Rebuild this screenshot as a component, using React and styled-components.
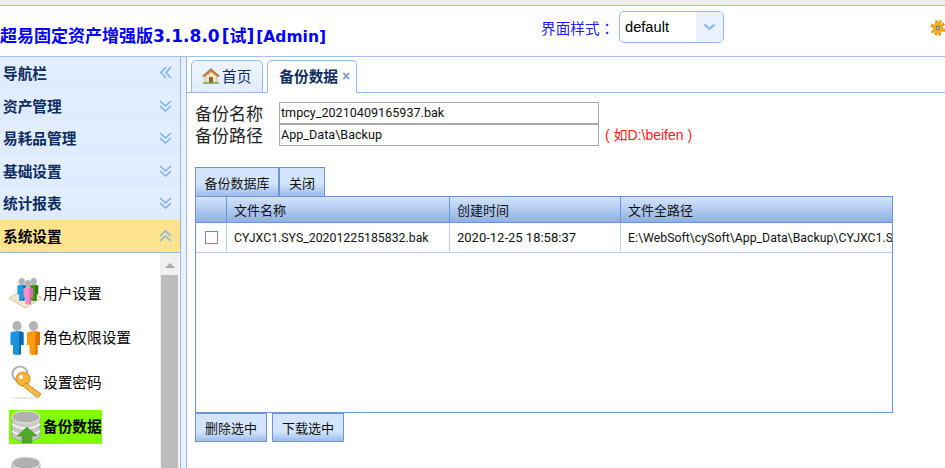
import React from "react";
import styled, { createGlobalStyle } from "styled-components";

const cjk = `"Liberation Sans", "Noto Sans CJK SC", sans-serif`;
const dataFont = `Roboto, "Noto Sans CJK SC", sans-serif`;

const GlobalStyle = createGlobalStyle`
    html, body {
        margin: 0;
        padding: 0;
        background: #fff;
        overflow: hidden;
    }
    body {
        font-family: ${cjk};
        font-size: 14.67px;
        color: #000;
    }
`;

const navItems = [
    { title: "导航栏", icon: "left" },
    { title: "资产管理", icon: "down" },
    { title: "易耗品管理", icon: "down" },
    { title: "基础设置", icon: "down" },
    { title: "统计报表", icon: "down" },
    { title: "系统设置", icon: "up", active: true },
];

const chevronPaths = {
    left: ["M7 1 L2 6.5 L7 12", "M12 1 L7 6.5 L12 12"],
    down: ["M1 2 L6.5 7 L12 2", "M1 7 L6.5 12 L12 7"],
    up: ["M1 7 L6.5 2 L12 7", "M1 12 L6.5 7 L12 12"],
};

function Chevrons({ dir }) {
    return (
        <svg width="13" height="13" viewBox="0 0 13 13" fill="none" stroke="#7fb2ea" strokeWidth="1.6">
            {chevronPaths[dir].map((d) => <path key={d} d={d} />)}
        </svg>
    );
}

function HomeIcon() {
    return (
        <svg width="18" height="17" viewBox="0 0 18 17">
            <path d="M3 8 V16 H15 V8 L9 3 Z" fill="#efe3c4" stroke="#b59a63" strokeWidth=".6" />
            <path d="M7 16 V10 H11 V16 Z" fill="#8a6a3a" />
            <path d="M0.5 9 L9 1.5 L17.5 9 L15.5 9.5 L9 4.5 L2.5 9.5 Z" fill="#c9843a" stroke="#8f5a20" strokeWidth=".5" />
            <path d="M1 16 H17" stroke="#6fa84a" strokeWidth="1.4" />
        </svg>
    );
}

function GearIcon() {
    return (
        <svg width="16" height="18" viewBox="0 0 16 18">
            <g transform="rotate(20 8 9)">
                <path d="M6.6 1 H9.4 V16.5 H6.6 Z M0.5 7.6 H15.5 V10.4 H0.5 Z" fill="#f0940a" />
                <path d="M2.6 3.6 L4.6 1.8 L13.4 14.4 L11.4 16.2 Z M13.4 3.6 L11.4 1.8 L2.6 14.4 L4.6 16.2 Z" fill="#ee9206" />
            </g>
            <circle cx="8" cy="9" r="5.4" fill="#f7ae22" />
            <circle cx="8" cy="9" r="2.4" fill="#85837a" />
            <circle cx="8" cy="9" r="1" fill="#d8d6cc" />
        </svg>
    );
}

function Person({ color, dark }) {
    return (
        <g>
            <ellipse cx="7" cy="5" rx="4.6" ry="5" fill="#b4b4b4" />
            <path d="M0.5 11.5 Q7 8.5 13.5 11.5 V24 H11 V33 Q7 35 3 33 V24 H0.5 Z" fill={color} />
            <path d="M9 10 Q12 10.5 13.5 11.5 V24 H11 V33 L9 34 Z" fill={dark} />
        </g>
    );
}

function UsersIcon() {
    return (
        <svg width="34" height="32" viewBox="0 0 34 32">
            <path d="M0 21 L17 12 L33 21 L16 31 Z" fill="#f3e7cf" stroke="#d8c39c" />
            <g transform="translate(8 1) scale(.68)"><Person color="#1f9be0" dark="#0c6fb0" /></g>
            <g transform="translate(20 1) scale(.68)"><Person color="#3f9a1c" dark="#2a7410" /></g>
            <g transform="translate(14 3) scale(.72)"><Person color="#f48fc8" dark="#dd6bab" /></g>
        </svg>
    );
}

function RolesIcon() {
    return (
        <svg width="32" height="36" viewBox="0 0 32 36">
            <g transform="translate(0 1)"><Person color="#1a93dd" dark="#0c69ad" /></g>
            <g transform="translate(16.5 1)"><Person color="#ff9a0a" dark="#dd6f00" /></g>
        </svg>
    );
}

function KeyIcon() {
    return (
        <svg width="33" height="34" viewBox="0 0 33 34">
            <circle cx="10" cy="9" r="7.5" fill="none" stroke="#b4b4b4" strokeWidth="2.2" />
            <circle cx="13" cy="14" r="7" fill="#f6b63c" stroke="#d08a1a" />
            <circle cx="11" cy="12" r="2" fill="#fff" />
            <path d="M16 18 L31 29 L28 33 L25 31 L23 29 L13 21 Z" fill="#f8bd44" stroke="#d08a1a" />
            <ellipse cx="15" cy="33" rx="14" ry="1" fill="#e8e8e8" />
        </svg>
    );
}

function DbIcon({ arrow }) {
    return (
        <svg width="30" height="34" viewBox="0 0 30 34">
            <path d="M1 7 V27 Q15 37 29 27 V7 Z" fill="#c9c9c7" stroke="#8d8d8b" strokeWidth=".6" />
            <path d="M1 14 Q15 23 29 14 M1 21 Q15 30 29 21" fill="none" stroke="#f4f4f2" strokeWidth="2" />
            <ellipse cx="15" cy="7" rx="14" ry="6" fill="#b0b0ae" stroke="#e9e9e7" />
            {arrow && <path d="M16 17 L26 26 H21 V33 H11 V26 H6 Z" fill="#4ea82b" stroke="#3a8a1e" strokeWidth=".5" />}
        </svg>
    );
}

const menuItems = [
    { label: "用户设置", icon: <UsersIcon /> },
    { label: "角色权限设置", icon: <RolesIcon /> },
    { label: "设置密码", icon: <KeyIcon /> },
    { label: "备份数据", icon: <DbIcon arrow />, active: true },
    { label: "", icon: <DbIcon /> },
];

function App() {
    return (
        <Page>
            <GlobalStyle />
            <Header>
                <Title>超易固定资产增强版3.1.8.0<em>[试]</em><small>[Admin]</small></Title>
                <ThemeBox>
                    <ThemeLabel>界面样式：</ThemeLabel>
                    <ThemeSelect>
                        <span>default</span>
                        <SelectArrow>
                            <svg width="13" height="8" viewBox="0 0 13 8" fill="none" stroke="#8fc0ea" strokeWidth="2.4">
                                <path d="M1.5 1.5 L6.5 6 L11.5 1.5" />
                            </svg>
                        </SelectArrow>
                    </ThemeSelect>
                </ThemeBox>
                <GearSlot><GearIcon /></GearSlot>
            </Header>
            <Body>
                <Sidebar>
                    {navItems.map((item) => (
                        <NavHead key={item.title} $active={item.active}>
                            {item.title}
                            <Chevrons dir={item.icon} />
                        </NavHead>
                    ))}
                    <NavBody>
                        <MenuList>
                            {menuItems.map((item, index) => (
                                <MenuItem key={index} $active={item.active}>
                                    <MenuIcon>{item.icon}</MenuIcon>
                                    <MenuText>{item.label}</MenuText>
                                </MenuItem>
                            ))}
                        </MenuList>
                        <ScrollBar>
                            <ScrollUp />
                            <ScrollThumb />
                        </ScrollBar>
                    </NavBody>
                </Sidebar>
                <Main>
                    <TabStrip>
                        <Tab><HomeIcon />首页</Tab>
                        <Tab $active>备份数据<TabClose>×</TabClose></Tab>
                    </TabStrip>
                    <Content>
                        <FormRow>
                            <FormLabel>备份名称</FormLabel>
                            <FormInput readOnly value="tmpcy_20210409165937.bak" />
                        </FormRow>
                        <FormRow>
                            <FormLabel>备份路径</FormLabel>
                            <FormInput readOnly value="App_Data\Backup" />
                            <Hint>( 如D:\beifen )</Hint>
                        </FormRow>
                        <Toolbar>
                            <ToolButton $width={84}>备份数据库</ToolButton>
                            <ToolButton $width={46}>关闭</ToolButton>
                        </Toolbar>
                        <Grid>
                            <GridHead>
                                <HeadCell $width={31} />
                                <HeadCell $width={223}>文件名称</HeadCell>
                                <HeadCell $width={171}>创建时间</HeadCell>
                                <HeadCell $grow>文件全路径</HeadCell>
                            </GridHead>
                            <GridRow>
                                <RowCell $width={31} $center><CheckBox /></RowCell>
                                <RowCell $width={223} $size={12.3}>CYJXC1.SYS_20201225185832.bak</RowCell>
                                <RowCell $width={171}>2020-12-25 18:58:37</RowCell>
                                <RowCell $grow $size={12.3}>E:\WebSoft\cySoft\App_Data\Backup\CYJXC1.SYS_20201225185832.bak</RowCell>
                            </GridRow>
                        </Grid>
                        <Footer>
                            <FootButton>删除选中</FootButton>
                            <FootButton>下载选中</FootButton>
                        </Footer>
                    </Content>
                </Main>
            </Body>
        </Page>
    );
}
export default App;

const Page = styled.div`
    width: 945px;
    height: 468px;
    overflow: hidden;
    background: #fff;
    border-top: 5px solid #ededed;
    box-sizing: border-box;
    display: flex;
    flex-direction: column;
`;
const Header = styled.div`
    height: 52px;
    box-sizing: border-box;
    flex: none;
    display: flex;
    align-items: center;
    border-top: 1px solid #a3c0e8;
    border-bottom: 1px solid #a3c0e8;
    white-space: nowrap;
`;
const Title = styled.div`
    width: 541px;
    flex: none;
    margin-top: 7px;
    font-family: "DejaVu Sans", "Noto Sans CJK SC", sans-serif;
    font-weight: bold;
    font-size: 17px;
    color: #0000ff;
    em {
        font-style: normal;
        margin: 0 2px;
    }
    small {
        font-size: 15.5px;
    }
`;
const ThemeBox = styled.div`
    display: flex;
    align-items: center;
    margin-top: -8px;
`;
const ThemeLabel = styled.span`
    width: 78px;
    font-family: "Noto Sans CJK TC", sans-serif;
    color: #1c1cf0;
`;
const ThemeSelect = styled.div`
    width: 105px;
    height: 32px;
    box-sizing: border-box;
    border: 1px solid #95b8e7;
    border-radius: 5px;
    display: flex;
    align-items: center;
    justify-content: space-between;
    padding-left: 5px;
    overflow: hidden;
`;
const SelectArrow = styled.div`
    width: 27px;
    height: 100%;
    background: #e9f1ff;
    display: flex;
    align-items: center;
    justify-content: center;
`;
const GearSlot = styled.div`
    margin-left: 206px;
    margin-top: -7px;
    display: flex;
`;
const Body = styled.div`
    flex: 1;
    display: flex;
    min-height: 0;
    background: #e9f1ff;
`;
const Sidebar = styled.div`
    width: 180px;
    flex: none;
    border-right: 1px solid #95b8e7;
    background: #fff;
    display: flex;
    flex-direction: column;
`;
const NavHead = styled.div`
    height: 31.5px;
    flex: none;
    padding: 0 8px 1px 3px;
    box-sizing: content-box;
    margin-bottom: -1px;
    display: flex;
    align-items: center;
    justify-content: space-between;
    font-weight: bold;
    border-bottom: 1px solid #95b8e7;
    color: ${(p) => (p.$active ? "#000" : "#0e2d5f")};
    background: ${(p) => (p.$active ? "#ffe48d" : "linear-gradient(#e3eeff, #deebff)")};
`;
const NavBody = styled.div`
    flex: 1;
    min-height: 0;
    margin-top: 1px;
    display: flex;
    overflow: hidden;
`;
const MenuList = styled.div`
    flex: 1;
    padding: 23px 0 0 9px;
    display: flex;
    flex-direction: column;
    align-items: flex-start;
    gap: 10.6px;
`;
const MenuItem = styled.div`
    height: 34px;
    flex: none;
    display: flex;
    align-items: center;
    white-space: nowrap;
    background: ${(p) => (p.$active ? "#7fff00" : "transparent")};
    font-weight: ${(p) => (p.$active ? "bold" : "normal")};
    &:last-child {
        margin-top: 2px;
    }
`;
const MenuIcon = styled.div`
    width: 34px;
    height: 34px;
    flex: none;
    display: flex;
    align-items: center;
    justify-content: center;
`;
const MenuText = styled.span`
    margin-bottom: 2px;
`;
const ScrollBar = styled.div`
    width: 19px;
    flex: none;
    margin-right: 1px;
    background: #f0f0f0;
    display: flex;
    flex-direction: column;
`;
const ScrollUp = styled.div`
    height: 22px;
    flex: none;
    position: relative;
    &::after {
        content: "";
        position: absolute;
        left: 5px;
        top: 10px;
        border-left: 5px solid transparent;
        border-right: 5px solid transparent;
        border-bottom: 5px solid #a8a8a8;
    }
`;
const ScrollThumb = styled.div`
    flex: 1;
    margin: 0 1px;
    background: #bcbcbc;
`;
const Main = styled.div`
    flex: 1;
    min-width: 0;
    margin-left: 5px;
    border-left: 1px solid #95b8e7;
    background: #fff;
    display: flex;
    flex-direction: column;
`;
const TabStrip = styled.div`
    height: 36px;
    flex: none;
    box-sizing: border-box;
    padding: 3px 0 0 4px;
    display: flex;
    gap: 4px;
    align-items: flex-end;
    border-bottom: 1px solid #95b8e7;
`;
const Tab = styled.div`
    height: 33px;
    box-sizing: border-box;
    margin-bottom: -1px;
    padding: ${(p) => (p.$active ? "0 6px 2px 11px" : "0 11px 2px 10px")};
    display: flex;
    align-items: center;
    gap: 2px;
    border: 1px solid #95b8e7;
    border-radius: 5px 5px 0 0;
    font-weight: ${(p) => (p.$active ? "bold" : "normal")};
    color: #0e2d5f;
    background: ${(p) => (p.$active ? "#fff" : "linear-gradient(#eff5ff, #e0ecff)")};
    border-bottom-color: ${(p) => (p.$active ? "#fff" : "#95b8e7")};
`;
const TabClose = styled.span`
    color: #7f97bd;
    font-size: 14px;
    font-weight: bold;
    margin-left: 2px;
`;
const Content = styled.div`
    flex: 1;
    padding: 9px 0 0 8px;
    display: flex;
    flex-direction: column;
`;
const FormRow = styled.div`
    height: 22px;
    display: flex;
    align-items: center;
`;
const FormLabel = styled.label`
    width: 84px;
    margin-top: -2px;
    font-size: 17px;
    color: #222;
`;
const FormInput = styled.input`
    width: 320px;
    height: 22px;
    box-sizing: border-box;
    border: 1px solid #a9a9a9;
    padding: 0 1px 2px;
    font: 12.6px ${dataFont};
    color: #111;
    outline: none;
`;
const Hint = styled.span`
    margin-left: 6px;
    margin-top: -2px;
    font-size: 14px;
    color: #ff2020;
`;
const Toolbar = styled.div`
    display: flex;
    margin-top: 21px;
`;
const ToolButton = styled.button`
    width: ${(p) => p.$width}px;
    height: 29px;
    padding: 0;
    border: 1px solid #6f93d6;
    border-bottom: none;
    background: linear-gradient(#d3e5fd 55%, #9dbcea);
    font: 13px ${cjk};
    color: #111;
`;
const Grid = styled.div`
    width: 698px;
    height: 217px;
    flex: none;
    box-sizing: border-box;
    border: 1px solid #6f93d6;
    overflow: hidden;
`;
const GridHead = styled.div`
    height: 26px;
    display: flex;
    background: linear-gradient(#d3e5fd, #8eb0e4);
    border-bottom: 1px solid #6f93d6;
    box-sizing: border-box;
`;
const GridRow = styled.div`
    height: 30px;
    display: flex;
    border-bottom: 1px solid #b9d0f0;
    box-sizing: border-box;
`;
const HeadCell = styled.div`
    width: ${(p) => (p.$width ? `${p.$width}px` : "auto")};
    flex: ${(p) => (p.$grow ? "1" : "none")};
    box-sizing: border-box;
    padding: 0 0 1px 7px;
    display: flex;
    align-items: center;
    font-size: 13px;
    color: #111;
    border-right: ${(p) => (p.$grow ? "none" : "1px solid #6f93d6")};
`;
const RowCell = styled.div`
    width: ${(p) => (p.$width ? `${p.$width}px` : "auto")};
    flex: ${(p) => (p.$grow ? "1" : "none")};
    min-width: 0;
    box-sizing: border-box;
    padding-left: ${(p) => (p.$center ? "0" : "7px")};
    display: flex;
    align-items: center;
    justify-content: ${(p) => (p.$center ? "center" : "flex-start")};
    font: ${(p) => p.$size || 13}px ${dataFont};
    color: #111;
    white-space: nowrap;
    overflow: hidden;
    border-right: ${(p) => (p.$grow ? "none" : "1px solid #b9d0f0")};
`;
const CheckBox = styled.span`
    width: 11px;
    height: 11px;
    border: 1px solid #6c8ebf;
    background: #fff;
`;
const Footer = styled.div`
    display: flex;
    gap: 5px;
`;
const FootButton = styled.button`
    width: 72px;
    height: 29px;
    padding: 0;
    border: 1px solid #6f93d6;
    background: linear-gradient(#d3e5fd 65%, #9dbcea);
    font: 13px ${cjk};
    color: #111;
`;
